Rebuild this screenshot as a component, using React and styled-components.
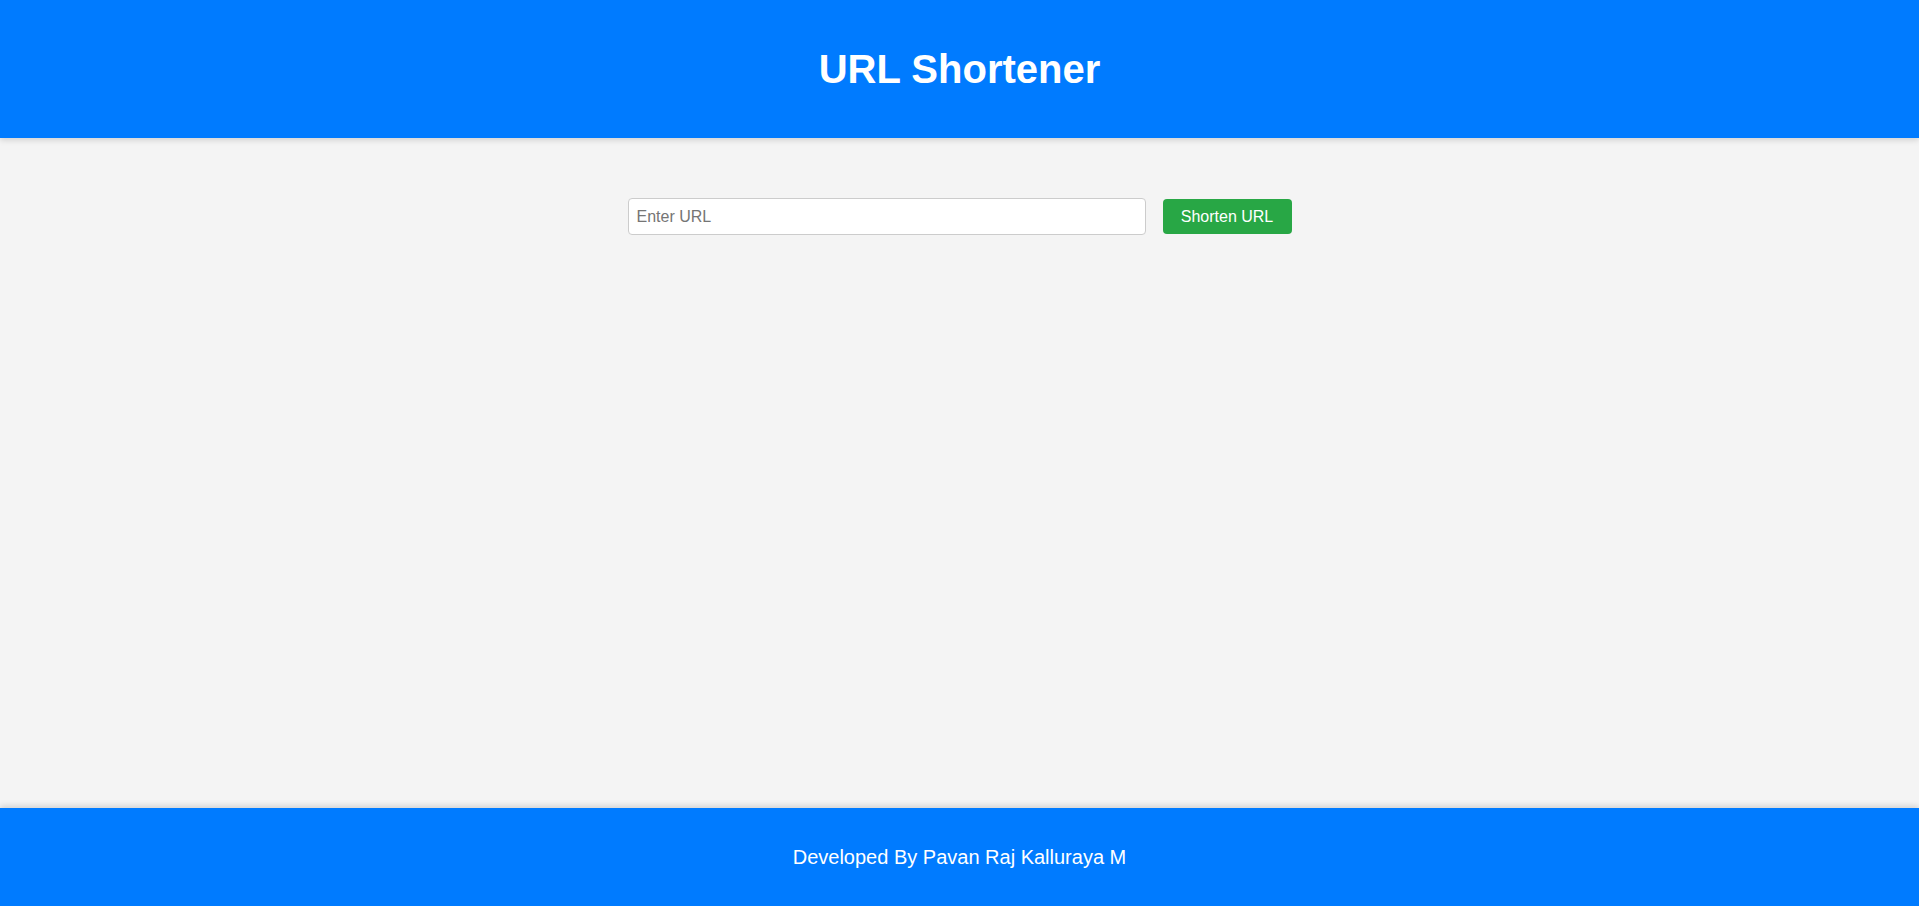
import React, { useState } from "react";
import styled, { createGlobalStyle } from "styled-components";

const GlobalStyle = createGlobalStyle`
  html, body {
    margin: 0;
    padding: 0;
    height: 100%;
  }
  body {
    font-family: "Liberation Sans", Arial, sans-serif;
    background-color: #f4f4f4;
  }
  #root {
    min-height: 100vh;
    display: flex;
    flex-direction: column;
  }
`;

const Header = styled.header`
  background-color: #007bff;
  color: white;
  height: 138px;
  display: flex;
  align-items: center;
  justify-content: center;
  box-shadow: 0 2px 6px rgba(0, 0, 0, 0.15);
  position: relative;
  z-index: 1;
`;

const Title = styled.h1`
  margin: 0;
  font-size: 40px;
  font-weight: bold;
`;

const Main = styled.main`
  flex: 1;
  display: flex;
  flex-direction: column;
  align-items: center;
  padding-top: 60px;
`;

const Form = styled.form`
  display: flex;
  align-items: center;
  gap: 17px;
`;

const Input = styled.input`
  width: 518px;
  height: 37px;
  box-sizing: border-box;
  padding: 8px;
  font-size: 16px;
  font-family: "Liberation Sans", Arial, sans-serif;
  border: 1px solid #ccc;
  border-radius: 4px;
  background: white;
  &::placeholder {
    color: #757575;
  }
`;

const Button = styled.button`
  background-color: #28a745;
  color: white;
  border: none;
  border-radius: 4px;
  font-size: 16px;
  font-family: "Liberation Sans", Arial, sans-serif;
  width: 129px;
  height: 35px;
  padding: 0;
  cursor: pointer;
  &:hover {
    background-color: #218838;
  }
`;

const Footer = styled.footer`
  background-color: #007bff;
  color: white;
  height: 98px;
  display: flex;
  align-items: center;
  justify-content: center;
  font-size: 20px;
  box-shadow: 0 -2px 6px rgba(0, 0, 0, 0.15);
`;

const App = () => {
  const [url, setUrl] = useState("");

  const submit = (e) => {
    e.preventDefault();
    //shorten the url here
  };

  return (
    <>
      <GlobalStyle />
      <Header>
        <Title>URL Shortener</Title>
      </Header>
      <Main>
        <Form onSubmit={submit}>
          <Input
            type="text"
            placeholder="Enter URL"
            value={url}
            onChange={(e) => setUrl(e.target.value)}
          />
          <Button type="submit">Shorten URL</Button>
        </Form>
      </Main>
      <Footer>Developed By Pavan Raj Kalluraya M</Footer>
    </>
  );
};

export default App;
